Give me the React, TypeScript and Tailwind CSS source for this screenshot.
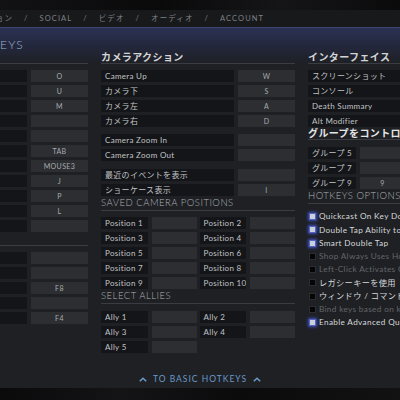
import React from "react";

const font = "font-['Lato','Noto_Sans_CJK_JP',sans-serif]";

function KeyRow({ label, k, keyW = "w-[57px]" }: { label?: string; k?: string; keyW?: string }) {
  return (
    <div className="flex h-[12px] gap-[4px]">
      <div className="flex flex-1 items-center overflow-hidden whitespace-nowrap bg-[#141518] px-[4px] text-[8px] tracking-[0.3px] text-[#c1c3c6]">
        {label}
      </div>
      <div className={`${keyW} flex shrink-0 items-center justify-center bg-[#2c2e32] text-[7px] tracking-[0.4px] text-[#a9acb0]`}>
        {k}
      </div>
    </div>
  );
}

function Heading({ text, jp, className = "" }: { text?: string; jp?: boolean; className?: string }) {
  return (
    <div
      className={`flex items-center border-b border-[#3a3c41] whitespace-nowrap ${
        jp
          ? "text-[10px] font-bold tracking-[0.4px] text-[#d2d4d6]"
          : "text-[9.5px] font-light tracking-[0.5px] text-[#aeb2b6]"
      } ${className}`}
    >
      {text}
    </div>
  );
}

function Check({ label, on, dim }: { label: string; on?: boolean; dim?: boolean }) {
  return (
    <div className="flex h-[13.25px] items-center gap-[3px] whitespace-nowrap">
      <span
        className={`ml-[1px] h-[7px] w-[7px] shrink-0 border ${
          on
            ? "border-[#5563b8] bg-[#c9d1dd] shadow-[0_0_3px_1px_#3f4fc0]"
            : "border-[#2c2d30] bg-[#050506]"
        }`}
      />
      <span className={`text-[8.2px] tracking-[0.35px] ${dim ? "text-[#626569]" : "text-[#d6d8da]"}`}>
        {label}
      </span>
    </div>
  );
}

function Chevron() {
  return (
    <svg width="8" height="5" viewBox="0 0 8 5" fill="none">
      <polyline points="0.8,4.3 4,1.2 7.2,4.3" stroke="#6b9ac8" strokeWidth="1.5" />
    </svg>
  );
}

export default function App() {
  const leftTop = ["O", "U", "M", "", "", "TAB", "MOUSE3", "J", "P", "L", ""];
  const leftBottom = ["", "", "F8", "", "F4"];
  const camera = [
    ["Camera Up", "W"],
    ["カメラ下", "S"],
    ["カメラ左", "A"],
    ["カメラ右", "D"],
  ];
  const positions = Array.from({ length: 10 }, (_, i) => `Position ${i + 1}`);
  const allies = ["Ally 1", "Ally 2", "Ally 3", "Ally 4", "Ally 5"];

  return (
    <div className={`${font} h-[400px] w-[400px] overflow-hidden bg-[#0b0b0d]`}>
      <div className="h-[10px] bg-[linear-gradient(90deg,#121214,#0a0a0b_40%,#151517_70%,#0b0b0c)]" />

      <nav className="flex h-[17px] items-center gap-[11px] bg-[#18191b] text-[7.5px] tracking-[1.1px] text-[#7e8185] whitespace-nowrap">
        <span className="ml-[-30px]">オプション</span>
        <span>/</span>
        <span>SOCIAL</span>
        <span>/</span>
        <span>ビデオ</span>
        <span>/</span>
        <span>オーディオ</span>
        <span>/</span>
        <span>ACCOUNT</span>
      </nav>

      <main className="flex h-[361px] flex-col border-t border-[#3d4472] bg-[linear-gradient(180deg,#2b3153_0px,#23273c_18px,#1e2024_36px)]">
        <div className="h-[23px] pt-[11px] text-[12px] font-light leading-[12px] tracking-[1.2px] text-[#9fb4cd]">EYS</div>

        <div className="flex gap-[13px]">
          {/* left column */}
          <div className="flex w-[88px] shrink-0 flex-col">
            <Heading className="h-[13px]" />
            <div className="mt-[6px] flex flex-col gap-[3px]">
              {leftTop.map((k, i) => (
                <KeyRow key={i} k={k} />
              ))}
            </div>
            <div className="h-[14px] border-b border-[#3a3c41]" />
            <div className="mt-[6px] flex flex-col gap-[3px]">
              {leftBottom.map((k, i) => (
                <KeyRow key={i} k={k} />
              ))}
            </div>
          </div>

          {/* middle column */}
          <div className="flex w-[194px] shrink-0 flex-col">
            <Heading jp text="カメラアクション" className="h-[13px]" />
            <div className="mt-[6px] flex flex-col gap-[3px]">
              {camera.map(([l, k]) => (
                <KeyRow key={l} label={l} k={k} />
              ))}
            </div>
            <div className="mt-[7px] flex flex-col gap-[3px]">
              <KeyRow label="Camera Zoom In" />
              <KeyRow label="Camera Zoom Out" />
            </div>
            <div className="mt-[8px] flex flex-col gap-[3px]">
              <KeyRow label="最近のイベントを表示" />
              <KeyRow label="ショーケース表示" k="I" />
            </div>
            <Heading text="SAVED CAMERA POSITIONS" className="mt-[1px] h-[14px]" />
            <div className="mt-[6px] grid grid-cols-2 gap-x-[3px] gap-y-[3px]">
              {positions.map((p) => (
                <KeyRow key={p} label={p} keyW="w-[45px]" />
              ))}
            </div>
            <Heading text="SELECT ALLIES" className="h-[15px]" />
            <div className="mt-[7px] grid grid-cols-2 gap-x-[3px] gap-y-[3px]">
              {allies.map((a) => (
                <KeyRow key={a} label={a} keyW="w-[45px]" />
              ))}
            </div>
          </div>

          {/* right column */}
          <div className="flex w-[160px] shrink-0 flex-col">
            <Heading jp text="インターフェイス" className="h-[13px]" />
            <div className="mt-[6px] flex flex-col gap-[3px]">
              <KeyRow label="スクリーンショット" />
              <KeyRow label="コンソール" />
              <KeyRow label="Death Summary" />
              <KeyRow label="Alt Modifier" />
            </div>
            <Heading jp text="グループをコントロール" className="h-[13px] text-[#e4e5e7]" />
            <div className="mt-[7px] flex w-[97px] flex-col gap-[3px]">
              <KeyRow label="グループ 5" keyW="w-[45px]" />
              <KeyRow label="グループ 7" keyW="w-[45px]" />
              <KeyRow label="グループ 9" k="9" keyW="w-[45px]" />
            </div>
            <Heading text="HOTKEYS OPTIONS" className="h-[15px] border-[#2a2c30]" />
            <div className="mt-[6px] flex flex-col">
              <Check on label="Quickcast On Key Down" />
              <Check on label="Double Tap Ability to Self-Cast" />
              <Check on label="Smart Double Tap" />
              <Check dim label="Shop Always Uses Hotkeys" />
              <Check dim label="Left-Click Activates Camera Drag" />
              <Check label="レガシーキーを使用" />
              <Check label="ウィンドウ / コマンドキーを使用" />
              <Check dim label="Bind keys based on keyboard layout" />
              <Check on label="Enable Advanced Quickcast/Autocast" />
            </div>
          </div>
        </div>

        <div className="mt-auto mb-[3px] flex h-[12px] items-center justify-center gap-[6px] text-[8.5px] tracking-[1px] text-[#6b9ac8]">
          <Chevron />
          <span>TO BASIC HOTKEYS</span>
          <Chevron />
        </div>
      </main>

      <div className="h-[12px] bg-[linear-gradient(90deg,#0a0a0b,#141416_30%,#0b0b0c_60%,#121213)]" />
    </div>
  );
}
